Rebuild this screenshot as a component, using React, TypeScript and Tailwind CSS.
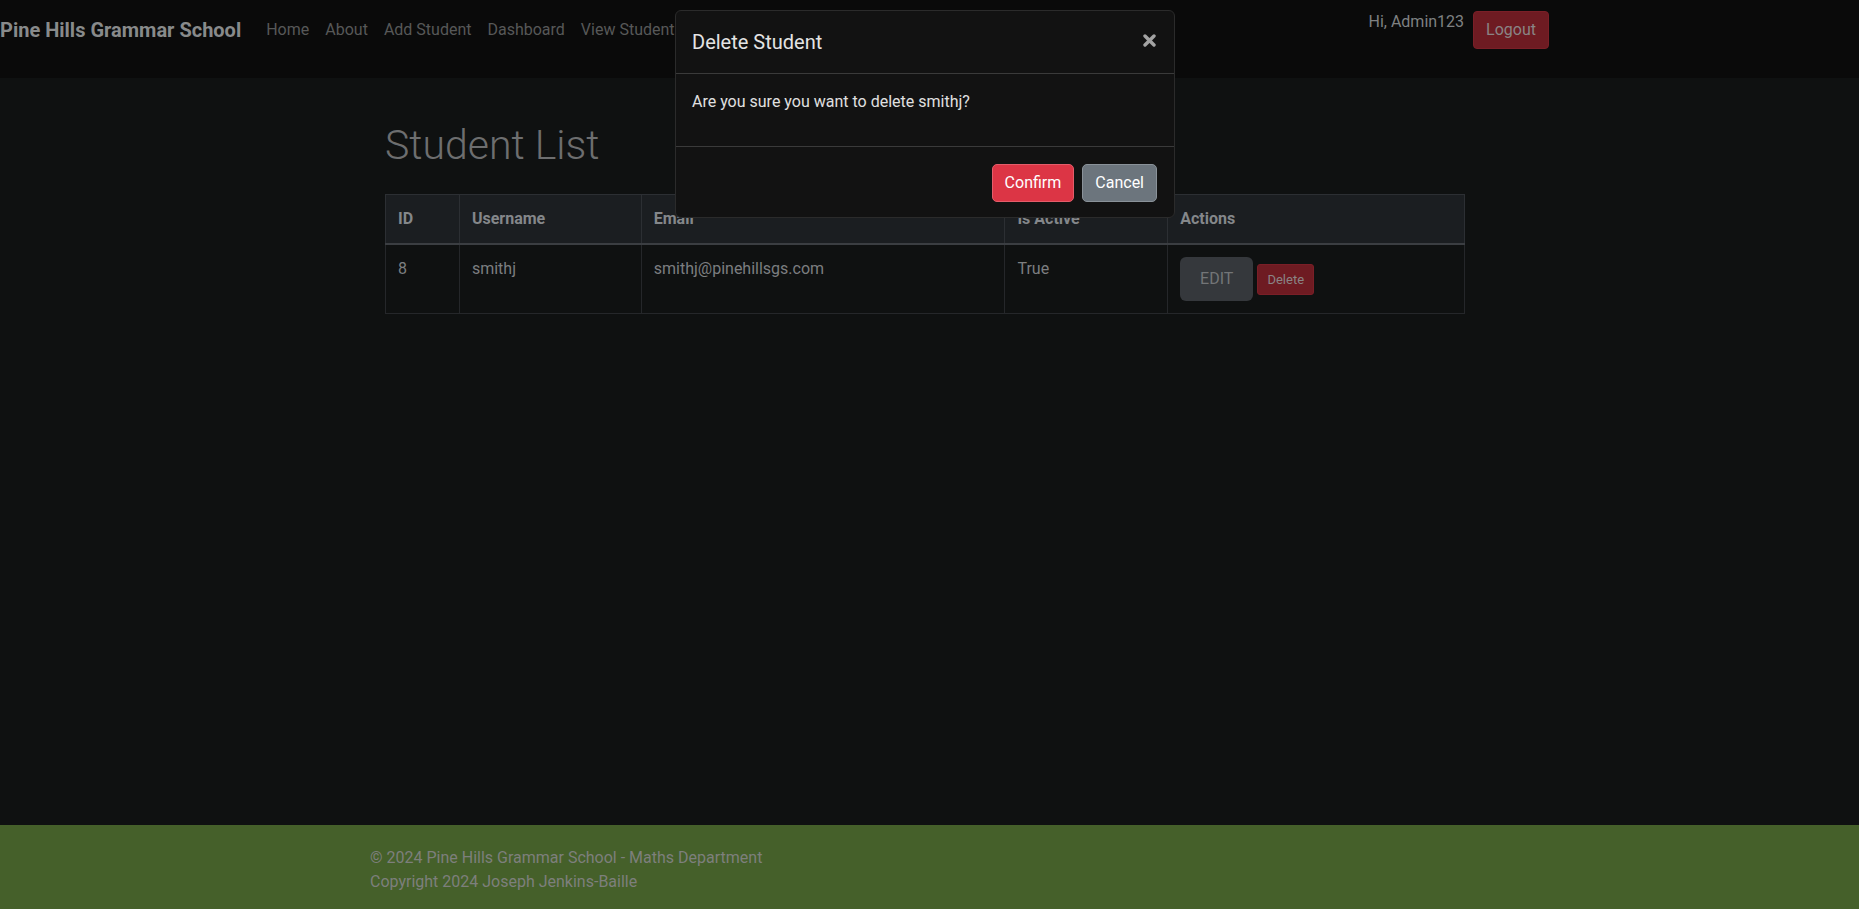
import React from 'react';

const students = [
  { id: 8, username: 'smithj', email: 'smithj@pinehillsgs.com', active: 'True' },
];

const navLinks = ['Home', 'About', 'Add Student', 'Dashboard', 'View Students'];

const App: React.FC = () => {
  return (
    <div className="min-h-screen flex flex-col bg-[#0f1111] font-['Roboto',sans-serif] text-[16px] leading-[24px]">
      {/* Navbar */}
      <nav className="h-[78px] bg-[#0a0a0a] flex items-start pt-[10px] pr-[310px]">
        <span className="text-[20px] leading-[30px] font-bold text-[#888a8b] py-[5px] mr-[17px]">Pine Hills Grammar School</span>
        <div className="flex">
          {navLinks.map((link) => (
            <span key={link} className="px-[8px] py-[8px] text-[#575858]">{link}</span>
          ))}
        </div>
        <div className="ml-auto flex items-start">
          <span className="text-[#7f8182] mr-[9px]">Hi, Admin123</span>
          <button className="mt-[1px] h-[38px] px-[12px] rounded-[4px] bg-[#6e1b22] border border-[#7a1f27] text-[#8a8485]">
            Logout
          </button>
        </div>
      </nav>

      {/* Main */}
      <main className="flex-1 pr-[9px]">
        <div className="w-[1140px] mx-auto px-[30px] pt-[43px]">
          <h1 className="text-[41px] leading-[48px] font-light text-[#6d6e6f] mb-[25px]">Student List</h1>
          <table className="w-full border-collapse text-left">
            <colgroup>
              <col className="w-[74px]" />
              <col className="w-[182px]" />
              <col className="w-[364px]" />
              <col className="w-[163px]" />
              <col className="w-[297px]" />
            </colgroup>
            <thead>
              <tr className="bg-[#1b1e21]">
                {['ID', 'Username', 'Email', 'Is Active', 'Actions'].map((h) => (
                  <th key={h} className="border border-[#2c2f33] border-b-2 border-b-[#3b3e42] px-[12px] py-[12px] font-bold text-[#84878a]">
                    {h}
                  </th>
                ))}
              </tr>
            </thead>
            <tbody>
              {students.map((s) => (
                <tr key={s.id}>
                  <td className="border border-[#25272a] px-[12px] py-[12px] align-top text-[#7c7e80]">{s.id}</td>
                  <td className="border border-[#25272a] px-[12px] py-[12px] align-top text-[#7c7e80]">{s.username}</td>
                  <td className="border border-[#25272a] px-[12px] py-[12px] align-top text-[#7c7e80]">{s.email}</td>
                  <td className="border border-[#25272a] px-[12px] py-[12px] align-top text-[#7c7e80]">{s.active}</td>
                  <td className="border border-[#25272a] px-[12px] py-[12px] align-top">
                    <div className="flex items-center gap-[4px]">
                      <button className="w-[73px] h-[44px] rounded-[6px] bg-[#35383c] text-[#737577]">EDIT</button>
                      <button className="mt-[1px] w-[57px] h-[31px] rounded-[3px] bg-[#6e1b22] border border-[#7a1f27] text-[13px] leading-[20px] text-[#8a8485]">
                        Delete
                      </button>
                    </div>
                  </td>
                </tr>
              ))}
            </tbody>
          </table>
        </div>
      </main>

      {/* Footer */}
      <footer className="bg-[#45602a] pr-[9px]">
        <div className="w-[1140px] mx-auto px-[15px] pt-[21px] pb-[15px] text-[#7d7f7c]">
          <p>© 2024 Pine Hills Grammar School - Maths Department</p>
          <p>Copyright 2024 Joseph Jenkins-Baille</p>
        </div>
      </footer>

      {/* Delete modal */}
      <div className="fixed inset-0 flex justify-center items-start pt-[10px] pr-[9px]">
        <div className="w-[500px] bg-[#121212] border border-[#2b2b2b] rounded-[6px]">
          <div className="flex items-center justify-between px-[16px] py-[16px] border-b border-[#3a3a3a]">
            <h5 className="text-[20px] leading-[30px] text-[#e4e4e4]">Delete Student</h5>
            <button className="mr-[2px] -mt-[4px] text-[#a3a3a3]" aria-label="Close">
              <svg width="13" height="13" viewBox="0 0 13 13">
                <path d="M2 2L11 11M11 2L2 11" stroke="currentColor" strokeWidth="3.4" strokeLinecap="round" />
              </svg>
            </button>
          </div>
          <div className="px-[16px] pt-[16px] pb-[16px] border-b border-[#3a3a3a]">
            <p className="mb-[16px] text-[#e0e0e0]">Are you sure you want to delete smithj?</p>
          </div>
          <div className="flex justify-end gap-[8px] pt-[17px] pb-[15px] pr-[17px]">
            <button className="h-[38px] px-[12px] rounded-[5px] bg-[#dc3545] border border-[#e35d6a] text-white">Confirm</button>
            <button className="h-[38px] px-[12px] rounded-[5px] bg-[#6c757d] border border-[#8a9299] text-white">Cancel</button>
          </div>
        </div>
      </div>
    </div>
  );
};

export default App;
